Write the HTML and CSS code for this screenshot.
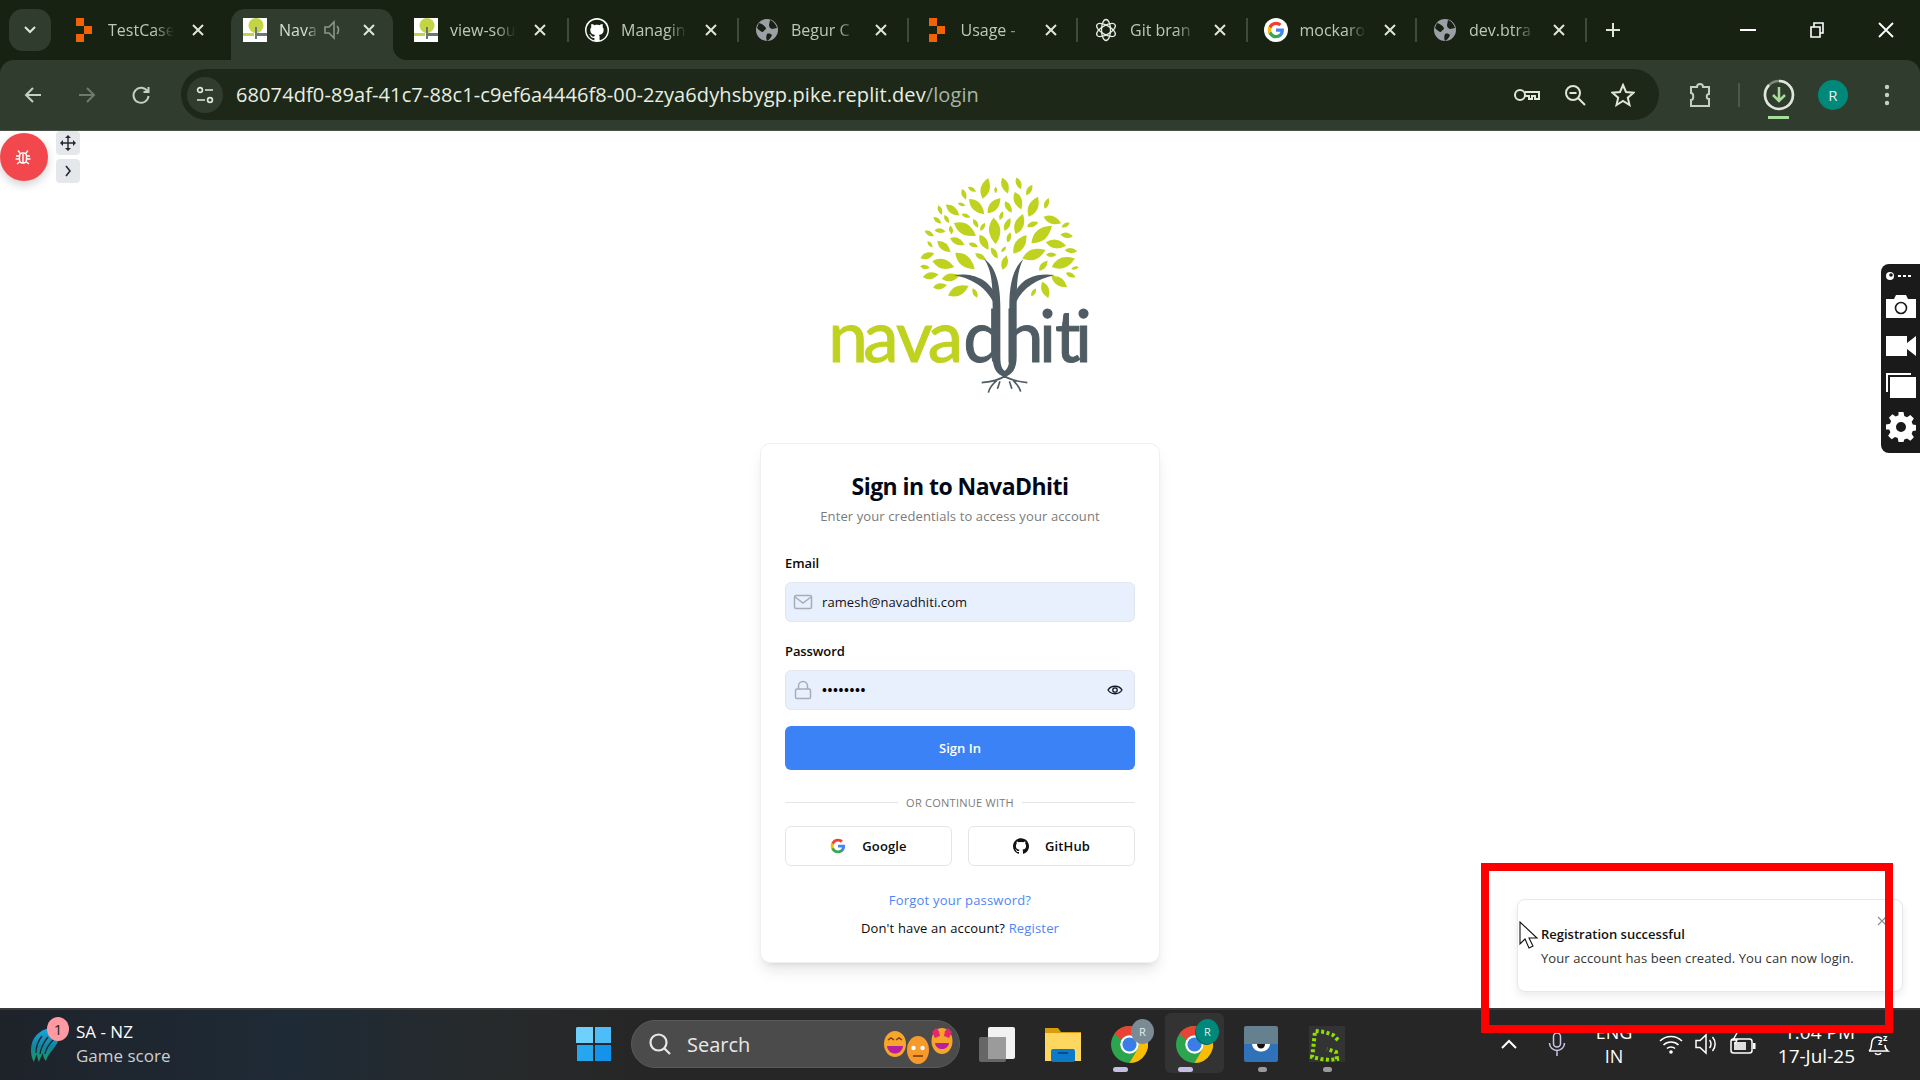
FILE: index.html
```html
<!DOCTYPE html>
<html>
 <head>
  <meta charset="UTF-8">
  <title>NavaDhiti</title>
  <link rel="stylesheet" href="styles.css">
 </head>
 <body>
  <svg class="sprite" width="0" height="0">
   <defs>
    <path id="leaf" d="M-1 0Q-.1-.85 1 0Q-.1.85-1 0Z"/>
    <linearGradient id="newsfill" x1="0" y1="0" x2="0" y2="1"><stop offset="0" stop-color="#1fa6e0"/><stop offset=".55" stop-color="#0f86a0"/><stop offset="1" stop-color="#1c9a62"/></linearGradient>
    <g id="xmark"><path d="M2 2L12 12M12 2L2 12" fill="none" stroke="currentColor" stroke-width="2"/></g>
    <g id="orange"><path d="M0 0h8v8H0zM8 8h8v8H8zM0 16h8v8H0z" fill="#f26207"/></g>
    <g id="minilogo">
     <rect width="24" height="24" fill="#fff"/>
     <ellipse cx="13" cy="7.500" rx="7.500" ry="7.500" fill="#c3d445"/>
     <path d="M12 9h2v12h-2z" fill="#6a767b"/>
     <path d="M0 15h11v3H0z" fill="#c3d445"/>
     <path d="M14 15h10v3H14z" fill="#6a767b"/>
    </g>
    <g id="globe">
     <circle cx="12" cy="12" r="11" fill="#9aa0a6"/>
     <path d="M4 5c3 1 5 2 7 5 0 2-2 2-3 4-2 0-4-2-6-4zM15 2c3 1 6 4 7 8l-5 1c-2-1-3-2-3-4zM12 16c2-1 4 0 5 1-1 3-3 5-5 6-1-2-1-5 0-7z" fill="#172213"/>
    </g>
    <g id="chrome">
     <circle cx="12" cy="12" r="12" fill="#2da44e"/>
     <path d="M12 0A12 12 0 0 1 22.4 6H12A6 6 0 0 0 6.8 9L2.2 5A12 12 0 0 1 12 0Z" fill="#ea4335"/>
     <path d="M22.4 6A12 12 0 0 1 12 24L17.2 15A6 6 0 0 0 17.2 9Z" fill="#fbbc05"/>
     <circle cx="12" cy="12" r="6" fill="#fff"/>
     <circle cx="12" cy="12" r="4.6" fill="#3b7de8"/>
    </g>
    <g id="gh"><path d="M12 .297c-6.63 0-12 5.373-12 12 0 5.303 3.438 9.8 8.205 11.385.6.113.82-.258.82-.63 0-.285-.01-1.04-.015-2.04-3.338.724-4.042-1.61-4.042-1.61C4.422 18.07 3.633 17.7 3.633 17.7c-1.087-.744.084-.729.084-.729 1.205.084 1.838 1.236 1.838 1.236 1.07 1.835 2.809 1.305 3.495.998.108-.776.417-1.305.76-1.605-2.665-.3-5.466-1.332-5.466-5.93 0-1.31.465-2.38 1.235-3.22-.135-.303-.54-1.523.105-3.176 0 0 1.005-.322 3.3 1.23.96-.267 1.98-.399 3-.405 1.02.006 2.04.138 3 .405 2.28-1.552 3.285-1.23 3.285-1.23.645 1.653.24 2.873.12 3.176.765.84 1.23 1.91 1.23 3.22 0 4.61-2.805 5.625-5.475 5.92.42.36.81 1.096.81 2.22 0 1.606-.015 2.896-.015 3.286 0 .315.21.69.825.57C20.565 22.092 24 17.592 24 12.297c0-6.627-5.373-12-12-12"/></g>
    <g id="gletter">
     <path d="M22.56 12.25c0-.78-.07-1.53-.2-2.25H12v4.26h5.92c-.26 1.37-1.04 2.53-2.21 3.31v2.77h3.57c2.08-1.92 3.28-4.74 3.28-8.09z" fill="#4285f4"/>
     <path d="M12 23c2.97 0 5.46-.98 7.28-2.66l-3.57-2.77c-.98.66-2.23 1.06-3.71 1.06-2.86 0-5.29-1.93-6.16-4.53H2.18v2.84C3.99 20.53 7.7 23 12 23z" fill="#34a853"/>
     <path d="M5.84 14.09c-.22-.66-.35-1.36-.35-2.09s.13-1.43.35-2.09V7.07H2.18C1.43 8.55 1 10.22 1 12s.43 3.45 1.18 4.93l2.85-2.22.81-.62z" fill="#fbbc05"/>
     <path d="M12 5.38c1.62 0 3.06.56 4.21 1.64l3.15-3.15C17.45 2.09 14.97 1 12 1 7.7 1 3.99 3.47 2.18 7.07l3.66 2.84c.87-2.6 3.3-4.53 6.16-4.53z" fill="#ea4335"/>
    </g>
   </defs>
  </svg>

  <header class="browser">
   <div class="tabstrip">
    <div class="tabmenu"><svg width="14" height="10" viewBox="0 0 14 10"><path d="M2 2l5 5 5-5" fill="none" stroke="#dfe6da" stroke-width="2"/></svg></div>
    <div class="tabs">
     <div class="tab no-sep"><svg class="fav" viewBox="0 0 24 24"><use href="#orange" transform="translate(4 0)"/></svg><span class="tab-title">TestCase</span><svg class="tab-x" viewBox="0 0 14 14"><use href="#xmark"/></svg></div>
     <div class="tab on"><svg class="fav" viewBox="0 0 24 24"><use href="#minilogo"/></svg><span class="tab-title short">Nava</span><svg class="tab-snd" viewBox="0 0 20 20"><path d="M2 7h4l5-5v16l-5-5H2zM14 6c2 2 2 6 0 8" fill="none" stroke="#8b9787" stroke-width="1.6"/></svg><svg class="tab-x" viewBox="0 0 14 14"><use href="#xmark"/></svg></div>
     <div class="tab"><svg class="fav" viewBox="0 0 24 24"><use href="#minilogo"/></svg><span class="tab-title">view-sou</span><svg class="tab-x" viewBox="0 0 14 14"><use href="#xmark"/></svg></div>
     <div class="tab"><svg class="fav" viewBox="0 0 24 24"><circle cx="12" cy="12" r="12" fill="#fff"/><use href="#gh" transform="translate(1.5 1.5) scale(.875)" fill="#172213"/></svg><span class="tab-title">Managin</span><svg class="tab-x" viewBox="0 0 14 14"><use href="#xmark"/></svg></div>
     <div class="tab"><svg class="fav" viewBox="0 0 24 24"><use href="#globe"/></svg><span class="tab-title">Begur C</span><svg class="tab-x" viewBox="0 0 14 14"><use href="#xmark"/></svg></div>
     <div class="tab"><svg class="fav" viewBox="0 0 24 24"><use href="#orange" transform="translate(4 0)"/></svg><span class="tab-title">Usage -</span><svg class="tab-x" viewBox="0 0 14 14"><use href="#xmark"/></svg></div>
     <div class="tab"><svg class="fav" viewBox="0 0 24 24"><g fill="none" stroke="#e6ebe3" stroke-width="1.3"><ellipse cx="12" cy="12" rx="4.5" ry="10.500"/><ellipse cx="12" cy="12" rx="4.5" ry="10.500" transform="rotate(60 12 12)"/><ellipse cx="12" cy="12" rx="4.5" ry="10.500" transform="rotate(120 12 12)"/></g></svg><span class="tab-title">Git bran</span><svg class="tab-x" viewBox="0 0 14 14"><use href="#xmark"/></svg></div>
     <div class="tab"><svg class="fav" viewBox="0 0 24 24"><circle cx="12" cy="12" r="12" fill="#fff"/><use href="#gletter" transform="translate(3 3) scale(.75)"/></svg><span class="tab-title">mockaro</span><svg class="tab-x" viewBox="0 0 14 14"><use href="#xmark"/></svg></div>
     <div class="tab"><svg class="fav" viewBox="0 0 24 24"><use href="#globe"/></svg><span class="tab-title">dev.btra</span><svg class="tab-x" viewBox="0 0 14 14"><use href="#xmark"/></svg></div>
    </div>
    <svg class="newtab" width="18" height="18" viewBox="0 0 18 18"><path d="M9 2v14M2 9h14" stroke="#dfe6da" stroke-width="2"/></svg>
    <div class="winctl">
     <svg width="16" height="16" viewBox="0 0 16 16"><path d="M0 8h16" stroke="#fff" stroke-width="2"/></svg>
     <svg width="16" height="18" viewBox="0 0 16 18"><path d="M2 6h9v10H2zM5 6V2h9v10h-3" fill="none" stroke="#fff" stroke-width="1.6"/></svg>
     <svg width="16" height="16" viewBox="0 0 16 16"><path d="M1 1l14 14M15 1L1 15" stroke="#fff" stroke-width="1.8"/></svg>
    </div>
   </div>
   <div class="toolbar">
    <div class="navbtn"><svg width="20" height="20" viewBox="0 0 20 20"><path d="M18 10H3M10 3l-7 7 7 7" fill="none" stroke="#c5d0c0" stroke-width="2"/></svg></div>
    <div class="navbtn"><svg width="20" height="20" viewBox="0 0 20 20"><path d="M2 10h15M10 3l7 7-7 7" fill="none" stroke="#6f7b6b" stroke-width="2"/></svg></div>
    <div class="navbtn"><svg width="20" height="20" viewBox="0 0 20 20"><path d="M16.5 6.5A7.5 7.5 0 1 0 17.5 11M17.5 2v5h-5" fill="none" stroke="#c5d0c0" stroke-width="2"/></svg></div>
    <div class="omnibox">
     <div class="site-btn"><svg width="20" height="20" viewBox="0 0 20 20"><g fill="none" stroke="#dfe6da" stroke-width="1.7"><circle cx="5" cy="5" r="2.4"/><path d="M10 5h8M2 15h8"/><circle cx="15" cy="15" r="2.4"/></g></svg></div>
     <span class="url">68074df0-89af-41c7-88c1-c9ef6a4446f8-00-2zya6dyhsbygp.pike.replit.dev<em>/login</em></span>
     <div class="omni-icons">
      <svg class="key-ic" width="28" height="20" viewBox="0 0 28 20"><g fill="none" stroke="#dfe6da" stroke-width="2"><circle cx="7" cy="10" r="5"/><path d="M12 7h14v7h-4v-3h-3v3h-3v-3h-4"/></g></svg>
      <svg width="24" height="24" viewBox="0 0 24 24"><g fill="none" stroke="#dfe6da" stroke-width="2"><circle cx="10" cy="10" r="7"/><path d="M15 15l7 7M6.5 10h7"/></g></svg>
      <svg width="24" height="24" viewBox="0 0 24 24"><path d="M12 2l3 7 7.5.7-5.700 5 1.700 7.300L12 18l-6.500 4 1.700-7.300-5.700-5L9 9z" fill="none" stroke="#dfe6da" stroke-width="2"/></svg>
     </div>
    </div>
    <div class="tool-right">
     <svg class="ext" width="24" height="26" viewBox="0 0 24 26"><path d="M3 5h6c0-4 6-4 6 0h6v7c-3 0-3 5 0 5v7H3v-6c3 0 3-7 0-7z" fill="none" stroke="#c5d0c0" stroke-width="2"/></svg>
     <span class="tool-sep"></span>
     <div class="dl">
      <svg width="32" height="32" viewBox="0 0 32 32"><circle cx="16" cy="16" r="14" fill="none" stroke="#7c8878" stroke-width="2.500"/><path d="M16 2A14 14 0 0 1 30 16A14 14 0 0 1 9 28A14 14 0 0 1 6 6" fill="none" stroke="#dfe6da" stroke-width="2.500"/><path d="M16 8v14M10 16l6 6 6-6" fill="none" stroke="#a8dc9a" stroke-width="2.500"/></svg>
      <i class="dl-bar"></i>
     </div>
     <span class="avatar">R</span>
     <svg width="6" height="24" viewBox="0 0 6 24"><g fill="#c5d0c0"><circle cx="3" cy="4" r="2.200"/><circle cx="3" cy="12" r="2.200"/><circle cx="3" cy="20" r="2.200"/></g></svg>
    </div>
   </div>
  </header>

  <main class="page">
   <svg class="logo" width="320" height="240" viewBox="0 0 960 720">
    <g fill="#bfd220">
     <use href="#leaf" transform="translate(556 85) rotate(-75) scale(32)"/>
     <use href="#leaf" transform="translate(615 77) rotate(70) scale(25)"/>
     <use href="#leaf" transform="translate(656 70) rotate(70) scale(19)"/>
     <use href="#leaf" transform="translate(492 103) rotate(70) scale(17)"/>
     <use href="#leaf" transform="translate(516 88) rotate(30) scale(14)"/>
     <use href="#leaf" transform="translate(587 90) rotate(90) scale(10)"/>
     <use href="#leaf" transform="translate(688 90) rotate(-60) scale(18)"/>
     <use href="#leaf" transform="translate(530 140) rotate(45) scale(32)"/>
     <use href="#leaf" transform="translate(582 137) rotate(-50) scale(30)"/>
     <use href="#leaf" transform="translate(654 122) rotate(70) scale(28)"/>
     <use href="#leaf" transform="translate(625 141) rotate(60) scale(20)"/>
     <use href="#leaf" transform="translate(700 140) rotate(-65) scale(33)"/>
     <use href="#leaf" transform="translate(740 130) rotate(-70) scale(17)"/>
     <use href="#leaf" transform="translate(485 133) rotate(20) scale(12)"/>
     <use href="#leaf" transform="translate(458 150) rotate(40) scale(26)"/>
     <use href="#leaf" transform="translate(498 167) rotate(20) scale(14)"/>
     <use href="#leaf" transform="translate(420 150) rotate(70) scale(15)"/>
     <use href="#leaf" transform="translate(440 177) rotate(60) scale(14)"/>
     <use href="#leaf" transform="translate(412 181) rotate(40) scale(15)"/>
     <use href="#leaf" transform="translate(604 167) rotate(-70) scale(14)"/>
     <use href="#leaf" transform="translate(527 190) rotate(60) scale(15)"/>
     <use href="#leaf" transform="translate(495 208) rotate(30) scale(38)"/>
     <use href="#leaf" transform="translate(548 200) rotate(-60) scale(14)"/>
     <use href="#leaf" transform="translate(584 213) rotate(85) scale(40)"/>
     <use href="#leaf" transform="translate(622 193) rotate(-65) scale(21)"/>
     <use href="#leaf" transform="translate(658 192) rotate(-70) scale(32)"/>
     <use href="#leaf" transform="translate(698 193) rotate(-20) scale(18)"/>
     <use href="#leaf" transform="translate(757 180) rotate(20) scale(28)"/>
     <use href="#leaf" transform="translate(797 195) rotate(-30) scale(14)"/>
     <use href="#leaf" transform="translate(725 223) rotate(-40) scale(40)"/>
     <use href="#leaf" transform="translate(800 226) rotate(10) scale(19)"/>
     <use href="#leaf" transform="translate(420 212) rotate(5) scale(17)"/>
     <use href="#leaf" transform="translate(453 210) rotate(80) scale(14)"/>
     <use href="#leaf" transform="translate(388 220) rotate(30) scale(16)"/>
     <use href="#leaf" transform="translate(472 244) rotate(25) scale(24)"/>
     <use href="#leaf" transform="translate(432 260) rotate(40) scale(26)"/>
     <use href="#leaf" transform="translate(552 247) rotate(60) scale(26)"/>
     <use href="#leaf" transform="translate(627 232) rotate(-75) scale(16)"/>
     <use href="#leaf" transform="translate(660 253) rotate(-55) scale(34)"/>
     <use href="#leaf" transform="translate(768 252) rotate(10) scale(31)"/>
     <use href="#leaf" transform="translate(390 253) rotate(50) scale(12)"/>
     <use href="#leaf" transform="translate(520 255) rotate(20) scale(15)"/>
     <use href="#leaf" transform="translate(583 279) rotate(60) scale(19)"/>
     <use href="#leaf" transform="translate(611 268) rotate(-50) scale(11)"/>
     <use href="#leaf" transform="translate(702 283) rotate(-20) scale(37)"/>
     <use href="#leaf" transform="translate(754 284) rotate(0) scale(16)"/>
     <use href="#leaf" transform="translate(813 272) rotate(5) scale(19)"/>
     <use href="#leaf" transform="translate(382 287) rotate(-20) scale(22)"/>
     <use href="#leaf" transform="translate(495 303) rotate(40) scale(38)"/>
     <use href="#leaf" transform="translate(542 290) rotate(30) scale(19)"/>
     <use href="#leaf" transform="translate(614 308) rotate(-75) scale(23)"/>
     <use href="#leaf" transform="translate(430 312) rotate(15) scale(34)"/>
     <use href="#leaf" transform="translate(375 321) rotate(10) scale(15)"/>
     <use href="#leaf" transform="translate(790 308) rotate(-20) scale(37)"/>
     <use href="#leaf" transform="translate(730 317) rotate(-50) scale(20)"/>
     <use href="#leaf" transform="translate(825 324) rotate(-15) scale(12)"/>
     <use href="#leaf" transform="translate(392 347) rotate(-10) scale(24)"/>
     <use href="#leaf" transform="translate(812 345) rotate(25) scale(16)"/>
     <use href="#leaf" transform="translate(452 352) rotate(-10) scale(27)"/>
     <use href="#leaf" transform="translate(778 365) rotate(35) scale(29)"/>
     <use href="#leaf" transform="translate(420 379) rotate(-10) scale(21)"/>
     <use href="#leaf" transform="translate(475 392) rotate(-25) scale(34)"/>
     <use href="#leaf" transform="translate(525 399) rotate(65) scale(16)"/>
     <use href="#leaf" transform="translate(736 390) rotate(70) scale(26)"/>
     <use href="#leaf" transform="translate(701 397) rotate(-60) scale(14)"/>
    </g>
    <g fill="#4f5c63">
     <path d="M552 296C585 318 601 365 601 440L601 590C601 618 607 628 614 632C621 628 628 618 628 590L628 440C628 370 640 325 670 297C650 335 650 380 650 440L650 590C650 628 635 645 614 650C593 645 578 628 578 590L578 440C578 370 575 330 552 296Z"/>
     <path d="M462 345C510 338 565 350 590 410L590 450C570 390 525 358 462 345Z"/>
     <path d="M765 345C710 338 660 352 640 410L640 450C655 390 705 358 765 345Z"/>
     <path d="M614 648C600 660 575 665 545 668M590 662C578 672 568 685 565 698M614 648C630 660 655 665 682 668M640 662C650 672 660 685 662 695M600 664C596 672 596 680 592 686M628 664C632 672 632 680 636 686" fill="none" stroke="#4f5c63" stroke-width="5"/>
    </g>
    <text class="logo-text" y="605"><tspan fill="#bfd220" stroke="#bfd220" x="85 190 288 383">nava</tspan><tspan fill="#4f5c63" stroke="#4f5c63" x="490 612 717 765 825">dhiti</tspan></text>
   </svg>

   <section class="card">
    <h1>Sign in to NavaDhiti</h1>
    <p class="sub">Enter your credentials to access your account</p>
    <label class="lbl">Email</label>
    <div class="field">
     <svg class="field-ic" width="20" height="20" viewBox="0 0 20 20"><g fill="none" stroke="#a6acb8" stroke-width="1.500"><rect x="1.500" y="3.500" width="17" height="13" rx="1.500"/><path d="M2 5l8 6 8-6"/></g></svg>
     <span class="val">ramesh@navadhiti.com</span>
    </div>
    <label class="lbl lbl-pass">Password</label>
    <div class="field">
     <svg class="field-ic" width="20" height="20" viewBox="0 0 20 20"><g fill="none" stroke="#a6acb8" stroke-width="1.500"><rect x="2.500" y="9" width="15" height="9.500" rx="1.500"/><path d="M5.500 9V6a4.500 4.500 0 0 1 9 0v3"/></g></svg>
     <span class="val dots">••••••••</span>
     <svg class="eye" width="16" height="16" viewBox="0 0 16 16"><g fill="none" stroke="#111827" stroke-width="1.300"><path d="M1 8c3-5 11-5 14 0-3 5-11 5-14 0z"/><circle cx="8" cy="8" r="2.200"/></g></svg>
    </div>
    <button class="primary">Sign In</button>
    <div class="divider"><span>OR CONTINUE WITH</span></div>
    <div class="socials">
     <button class="social"><svg width="16" height="16" viewBox="0 0 24 24"><use href="#gletter"/></svg>Google</button>
     <button class="social"><svg width="16" height="16" viewBox="0 0 24 24"><use href="#gh" fill="#111"/></svg>GitHub</button>
    </div>
    <a class="forgot">Forgot your password?</a>
    <p class="reg">Don't have an account? <a>Register</a></p>
   </section>

   <!-- dev bubble, floats over the page -->
   <div class="bug">
    <svg width="18" height="18" viewBox="0 0 18 18"><g fill="none" stroke="#fff" stroke-width="1.400"><rect x="5.500" y="5" width="7" height="10" rx="3"/><path d="M9 6v9M5.500 8H2M12.500 8H16M5.500 11H1.500M12.500 11H16.500M5.500 14L3 16M12.500 14L15 16M6 5L4 2.500M12 5L14 2.500"/></g></svg>
   </div>
   <div class="bug-handle h1"><svg width="16" height="16" viewBox="0 0 16 16"><path d="M8 0l3 3H5zM8 16l-3-3h6zM0 8l3-3v6zM16 8l-3 3V5zM7.300 3h1.400v10H7.300zM3 7.300h10v1.400H3z" fill="#1f2937"/></svg></div>
   <div class="bug-handle h2"><svg width="8" height="12" viewBox="0 0 8 12"><path d="M2 1l4 5-4 5" fill="none" stroke="#1f2937" stroke-width="1.600"/></svg></div>

   <div class="recorder">
    <svg width="32" height="10" viewBox="0 0 32 10"><circle cx="5" cy="5" r="4" fill="#fff"/><circle cx="6" cy="4" r="1.800" fill="#1a1a1a"/><path d="M13 4h3v2h-3zM18 4h3v2h-3zM23 4h3v2h-3z" fill="#fff"/></svg>
    <svg class="rec-cam" width="30" height="23" viewBox="0 0 30 23"><path d="M0 4h8l2-4h10l2 4h8v19H0z" fill="#fff"/><circle cx="15" cy="13" r="5.500" fill="none" stroke="#1a1a1a" stroke-width="1.600"/></svg>
    <svg class="rec-vid" width="30" height="20" viewBox="0 0 30 20"><path d="M0 0h21v7l9-7v20l-9-7v7H0z" fill="#fff"/></svg>
    <svg width="30" height="25" viewBox="0 0 30 25"><path d="M0 0h25v2H2v17H0z" fill="#fff"/><path d="M4 4h26v21H4z" fill="#fff"/></svg>
    <svg class="rec-gear" width="30" height="30" viewBox="0 0 24 24"><path fill="#fff" fill-rule="evenodd" d="M10 0h4l.6 3.200 2.200.9 2.700-1.800 2.800 2.800-1.800 2.700.9 2.200 3.200.6v4l-3.200.6-.9 2.200 1.800 2.700-2.800 2.800-2.700-1.800-2.200.9L14 24h-4l-.6-3.200-2.200-.9-2.700 1.800-2.800-2.800 1.800-2.700-.9-2.200L0 14v-4l3.200-.6.900-2.200-1.800-2.700 2.800-2.800 2.700 1.800 2.200-.9zM12 8a4 4 0 1 0 0 8 4 4 0 0 0 0-8z"/></svg>
   </div>

   <div class="toast">
    <div class="toast-title">Registration successful</div>
    <div class="toast-body">Your account has been created. You can now login.</div>
    <svg class="toast-x" width="10" height="10" viewBox="0 0 10 10"><path d="M1 1l8 8M9 1L1 9" stroke="#8b8b8b" stroke-width="1.100"/></svg>
   </div>
   <svg class="cursor" width="20" height="30" viewBox="0 0 20 30"><path d="M1 1v22l5-5 4 9 4-2-4-8h8z" fill="#fff" stroke="#111" stroke-width="1.100"/></svg>
  </main>

  <footer class="taskbar">
   <div class="news">
    <svg class="news-ic" width="32" height="36" viewBox="0 0 32 36"><path d="M20 1C9 3 1 11 1 23c0 5 1 9 3 12 1-4 2-6 3-8 0 3 1 6 2 8 1-4 3-7 4-9 0 3 1 6 3 8 1-5 5-9 8-13 3-4 6-9 5-14C28 3 24 1 20 1z" fill="url(#newsfill)"/><path d="M12 9C8 14 6 20 6 26M18 10C14 15 11 20 10 27M24 12C20 16 16 21 15 27" fill="none" stroke="#1a2531" stroke-width="1.300"/></svg>
    <span class="news-badge">1</span>
    <div class="news-txt"><b>SA - NZ</b><span>Game score</span></div>
   </div>
   <div class="task-center">
    <svg class="start" width="36" height="36" viewBox="0 0 36 36"><path d="M1 1h16v16H0V2z" fill="#6fd0fb"/><path d="M19 1h16v16H19z" fill="#4ebcf7"/><path d="M1 19h16v16H1z" fill="#27a6f0"/><path d="M19 19h16v16H19z" fill="#1493ea"/></svg>
    <div class="search">
     <svg width="24" height="24" viewBox="0 0 24 24"><g fill="none" stroke="#e8e8e8" stroke-width="2.200"><circle cx="10.500" cy="10.500" r="8"/><path d="M16.500 16.500L22 22"/></g></svg>
     <span>Search</span>
     <div class="emoji">
      <svg width="24" height="26" viewBox="0 0 24 26"><ellipse cx="12" cy="13" rx="11" ry="13" fill="#f7a62b"/><path d="M4 15h16c-1 10-15 10-16 0z" fill="#b81fa0"/><path d="M5 9l3-2 3 2M13 9l3-2 3 2" fill="none" stroke="#7a3b10" stroke-width="1.500"/></svg>
      <svg class="em-low" width="22" height="28" viewBox="0 0 22 28"><ellipse cx="11" cy="14" rx="11" ry="14" fill="#f59a2b"/><circle cx="6.500" cy="12" r="2.200" fill="#fff"/><circle cx="15.500" cy="12" r="2.200" fill="#fff"/><path d="M6 20h10" stroke="#7a3b10" stroke-width="1.600"/></svg>
      <svg class="em-high" width="22" height="28" viewBox="0 0 22 28"><ellipse cx="11" cy="15" rx="10.500" ry="13" fill="#f5a52c"/><path d="M1 6l4-4 3 3 1 5-5 2zM21 6l-4-4-3 3-1 5 5 2z" fill="#e8266b"/><path d="M4 17h14c-1 8-13 8-14 0z" fill="#b81fa0"/></svg>
     </div>
    </div>
    <div class="apps">
     <div class="app app-view"><svg width="36" height="36" viewBox="0 0 36 36"><rect x="0" y="11" width="27" height="25" rx="2" fill="#666"/><rect x="9" y="1" width="27" height="32" rx="2" fill="#f2f2f2"/><rect x="9" y="11" width="18" height="22" fill="#9b9b9b"/></svg></div>
     <div class="app app-files"><svg width="36" height="36" viewBox="0 0 36 36"><path d="M0 2h13l3 4h20v29H0z" fill="#d99c0a"/><path d="M0 7h36v28H0z" fill="#fdd75f"/><rect x="6" y="23" width="24" height="13" rx="2" fill="#0c79c9"/><path d="M13 27h10" stroke="#063f73" stroke-width="1.500"/></svg></div>
     <div class="app app-c1"><svg width="37" height="37" viewBox="0 0 24 24"><use href="#chrome"/></svg><span class="ch-badge grey">R</span><i class="pip wide"></i></div>
     <div class="app app-c2"><svg width="37" height="37" viewBox="0 0 24 24"><use href="#chrome"/></svg><span class="ch-badge teal">R</span><i class="pip wide"></i></div>
     <div class="app app-eye"><svg width="34" height="36" viewBox="0 0 34 36"><path d="M2 0h30a2 2 0 0 1 2 2v16H0V2a2 2 0 0 1 2-2z" fill="#65808f"/><path d="M0 18h34v16a2 2 0 0 1-2 2H2a2 2 0 0 1-2-2z" fill="#2f72b9"/><path d="M8 18h18c-1 10-17 10-18 0z" fill="#fff"/><path d="M13 18h8c0 6-8 6-8 0z" fill="#111"/></svg><i class="pip"></i></div>
     <div class="app app-g"><svg width="36" height="36" viewBox="0 0 36 36"><rect width="36" height="36" fill="#333"/><path d="M29 14L24 9 16 6 6 5 5 15 4 24 3 31 12 33 21 34 28 33 27 26 18 23" fill="none" stroke="#8ee000" stroke-width="4" stroke-dasharray="3 2.500"/></svg><i class="pip"></i></div>
    </div>
   </div>
   <div class="tray">
    <svg class="tr-chev" width="18" height="10" viewBox="0 0 18 10"><path d="M2 9l7-7 7 7" fill="none" stroke="#fff" stroke-width="2"/></svg>
    <svg class="tr-mic" width="18" height="24" viewBox="0 0 18 24"><g fill="none" stroke="#c9c6e8" stroke-width="1.500"><rect x="5.500" y="1" width="7" height="14" rx="3.500"/><path d="M1.500 11a7.500 7.500 0 0 0 15 0M9 18.500V24"/></g></svg>
    <div class="tr-lang"><span>ENG</span><span>IN</span></div>
    <svg class="tr-wifi" width="24" height="20" viewBox="0 0 24 20"><g fill="none" stroke="#fff" stroke-width="1.600"><path d="M1 7c6-6 16-6 22 0M4.500 11c4-4 11-4 15 0M8 14.500c2-2 6-2 8 0"/></g><circle cx="12" cy="18" r="1.800" fill="#fff"/></svg>
    <svg class="tr-vol" width="24" height="22" viewBox="0 0 24 22"><g fill="none" stroke="#fff" stroke-width="1.500"><path d="M1 7.500h4L11 2v18l-6-5.500H1zM14.500 7c2 2 2 6 0 8M17.500 4c3.500 4 3.500 10 0 14"/></g></svg>
    <svg class="tr-bat" width="26" height="22" viewBox="0 0 26 22"><rect x="1" y="6" width="21" height="14" rx="2.500" fill="none" stroke="#fff" stroke-width="1.500"/><rect x="4" y="9" width="12" height="8" fill="#fff" opacity=".85"/><rect x="23" y="10" width="2.500" height="6" fill="#fff"/><path d="M7 0L3 7h4L5 11" fill="none" stroke="#fff" stroke-width="1.400"/></svg>
    <div class="tr-clock"><span>1:04 PM</span><span>17-Jul-25</span></div>
    <svg class="tr-bell" width="24" height="24" viewBox="0 0 24 24"><path d="M1 19c3-2 2-6 3-10 1-3 4-4 6-4M10 5c2 0 3 .5 4 2M17 13c0 3 1 4.500 3 6H1M7 21c1 2 5 2 6 0" fill="none" stroke="#fff" stroke-width="1.500"/><text x="10" y="13" class="zz">z</text><text x="15" y="9" class="zz">z</text></svg>
   </div>
  </footer>

  <div class="redbox"></div>
 </body>
</html>
```

FILE: styles.css
```css
*{ margin:0; padding:0; box-sizing:border-box;}

html,body{ height:100%;}

body{
 width:1920px;
 height:1080px;
 overflow:hidden;
 position:relative;
 display:flex;
 flex-direction:column;
 background:#fff;
 font-family:"Open Sans","Noto Sans",sans-serif;
}

.sprite{ position:absolute;}

/* browser top */
.browser{ background:#172213; height:131px;}

.tabstrip{
 height:60px;
 padding-top:9px;
 display:flex;
}

.tabmenu{
 width:42px;
 height:42px;
 margin-left:9px;
 margin-right:9px;
 border-radius:14px;
 background:#303c2d;
 display:flex;
 align-items:center;
 justify-content:center;
}

.tabs{ display:flex;}

.tab{
 width:171px;
 height:51px;
 padding:0 4px 9px 12px;
 display:flex;
 align-items:center;
 color:#bdc8b8;
}
.tab:nth-child(4){ width:170px;}
.tab:nth-child(n+5){ width:169.5px;}
.tab::after{
 content:"";
 width:2px;
 height:24px;
 margin-left:auto;
 background:#3f4a3c;
}
.tab.no-sep::after{ background:none;}

.tab.on{
 width:162px;
 margin-right:9px;
 padding-right:0;
 position:relative;
 border-radius:14px 14px 0 0;
 background:#303c2d;
 color:#d5dfd0;
}
.tab.on::after{ display:none;}
.tab.on::before{
 content:"";
 position:absolute;
 right:-14px;
 bottom:0;
 width:14px;
 height:14px;
 background:radial-gradient(circle at 100% 0,transparent 14px,#303c2d 14.5px);
}

.fav{ width:24px; height:24px; flex:none;}

.tab-title{
 width:66px;
 margin-left:12px;
 font-size:16px;
 white-space:nowrap;
 overflow:hidden;
 -webkit-mask-image:linear-gradient(90deg,#000 70%,transparent);
 mask-image:linear-gradient(90deg,#000 70%,transparent);
}
.tab-title.short{ width:40px;}

.tab-snd{ width:20px; height:20px; margin-left:4px; flex:none;}
.tab.on .tab-x{ margin-left:19px;}

.tab-x{
 width:14px;
 height:14px;
 margin-left:17px;
 flex:none;
 color:#dfe6da;
}

.newtab{ margin:12px 0 0 13px;}

.winctl{
 margin-left:auto;
 height:30px;
 margin-top:6px;
 padding-right:26px;
 display:flex;
 align-items:center;
 gap:53px;
}

.toolbar{
 height:71px;
 padding:9px 0 10px 6px;
 display:flex;
 align-items:stretch;
 background:#303c2d;
 border-radius:14px 14px 0 0;
 border-bottom:1px solid #4a5347;
}

.navbtn{
 width:54px;
 display:flex;
 align-items:center;
 justify-content:center;
}

.omnibox{
 width:1478px;
 margin-left:13px;
 display:flex;
 align-items:center;
 padding-left:6px;
 border-radius:26px;
 background:#1d2818;
}

.site-btn{
 width:36px;
 height:36px;
 border-radius:50%;
 background:#303c2d;
 display:flex;
 align-items:center;
 justify-content:center;
}

.url{
 margin-left:13px;
 font-size:20px;
 letter-spacing:.1px;
 color:#e8eee3;
 white-space:nowrap;
}
.url em{ font-style:normal; color:#aab5a5;}

.omni-icons{
 margin-left:auto;
 padding-right:24px;
 display:flex;
 align-items:center;
 gap:24px;
}
.key-ic{ margin-right:-2px;}

.tool-right{
 flex:1;
 display:flex;
 align-items:center;
 padding-left:29px;
}
.tool-sep{ width:2px; height:24px; margin:0 23px 0 26px; background:#4d584a;}
.dl{ position:relative; width:32px; height:32px; margin-right:23px;}
.dl-bar{
 position:absolute;
 left:5px;
 bottom:-8px;
 width:21px;
 height:3px;
 background:#a8dc9a;
}
.avatar{
 width:30px;
 height:30px;
 margin-right:36px;
 border-radius:50%;
 background:#00897b;
 color:#dff2ee;
 font-size:15px;
 line-height:30px;
 text-align:center;
}

/* page */
.page{
 flex:1;
 padding-top:29px;
 display:flex;
 flex-direction:column;
 align-items:center;
}

.logo{ flex:none;}
.logo-text{ font-family:Lato,sans-serif; font-size:213px; font-weight:400; stroke-width:3px;}

.card{
 width:400px;
 height:520px;
 margin-top:43px;
 padding:0 24px;
 background:#fff;
 border:1px solid #f0f0f0;
 border-radius:10px;
 box-shadow:0 10px 15px -3px rgba(0,0,0,.1),0 4px 6px -4px rgba(0,0,0,.1);
 color:#0a0a0a;
}

h1{
 margin-top:25px;
 height:34px;
 font-size:23px;
 font-weight:700;
 line-height:34px;
 text-align:center;
 letter-spacing:-.55px;
 color:#020817;
}

.sub{
 margin-top:3px;
 font-size:13px;
 line-height:20px;
 text-align:center;
 letter-spacing:.11px;
 color:#7b7b7b;
}

.lbl{
 display:block;
 margin-top:27px;
 font-size:13px;
 font-weight:600;
 line-height:20px;
 letter-spacing:-.1px;
}
.lbl-pass{ margin-top:19px;}

.field{
 height:40px;
 margin-top:9px;
 padding:0 11px 0 7px;
 display:flex;
 align-items:center;
 background:#e8f0fe;
 border:1px solid #e2e6ee;
 border-radius:6px;
}

.val{
 margin-left:9px;
 font-size:13px;
 letter-spacing:.1px;
 color:#111;
}
.val.dots{ font-size:13px; letter-spacing:.6px; color:#000; font-weight:700;}
.eye{ margin-left:auto;}

.primary{
 display:block;
 width:100%;
 height:44px;
 margin-top:16px;
 border:0;
 border-radius:6px;
 background:#3b82f6;
 color:#fff;
 font:600 13px "Open Sans","Noto Sans",sans-serif;
}

.divider{
 margin-top:22px;
 height:20px;
 display:flex;
 align-items:center;
 gap:8px;
 font-size:11px;
 letter-spacing:.25px;
 color:#7b7b7b;
}
.divider::before,.divider::after{
 content:"";
 flex:1;
 height:1px;
 background:#e5e5e5;
}

.socials{
 margin-top:14px;
 display:grid;
 grid-template-columns:1fr 1fr;
 gap:16px;
}

.social{
 height:40px;
 display:flex;
 align-items:center;
 justify-content:center;
 gap:16px;
 background:#fff;
 border:1px solid #e5e5e5;
 border-radius:6px;
 color:#0a0a0a;
 font:600 13px "Open Sans","Noto Sans",sans-serif;
 letter-spacing:.15px;
}

.forgot{
 display:block;
 margin-top:24px;
 font-size:13px;
 line-height:20px;
 text-align:center;
 letter-spacing:.2px;
 color:#4f86f7;
}

.reg{
 margin-top:8px;
 font-size:13px;
 line-height:20px;
 text-align:center;
 letter-spacing:.16px;
}
.reg a{ color:#4f86f7;}

/* things floating over the page */
.bug{
 position:absolute;
 left:0;
 top:133px;
 width:48px;
 height:48px;
 padding-right:2px;
 display:flex;
 align-items:center;
 justify-content:center;
 border-radius:50%;
 background:#f2474c;
 box-shadow:0 4px 10px rgba(0,0,0,.18);
}

.bug-handle{
 position:absolute;
 left:56px;
 width:24px;
 height:24px;
 display:flex;
 align-items:center;
 justify-content:center;
 border-radius:4px;
 background:#e5e7eb;
}
.bug-handle.h1{ top:131px;}
.bug-handle.h2{ top:159px;}

.recorder{
 position:absolute;
 left:1881px;
 top:264px;
 width:39px;
 height:189px;
 padding:7px 4px 0 5px;
 display:flex;
 flex-direction:column;
 align-items:center;
 gap:17px;
 background:#1a1a1a;
 border-radius:8px 0 0 8px;
}
.rec-cam{ margin-top:-3px;}
.rec-vid{ margin-top:1px;}
.rec-gear{ margin-top:-3px;}

.toast{
 position:absolute;
 left:1517px;
 top:899px;
 width:386px;
 height:93px;
 padding:24px 23px 0;
 background:#fff;
 border:1px solid #e8e8e8;
 border-radius:8px;
 box-shadow:0 4px 8px rgba(0,0,0,.08);
}
.toast-title{ font-size:13px; font-weight:600; line-height:20px; color:#111;}
.toast-body{ margin-top:4px; font-size:13px; line-height:20px; letter-spacing:.1px; color:#333;}
.toast-x{ position:absolute; right:15px; top:16px;}

.cursor{ position:absolute; left:1519px; top:921px;}

.redbox{
 position:absolute;
 left:1481px;
 top:863px;
 width:412px;
 height:170px;
 border:8px solid #f00;
}

/* windows taskbar */
.taskbar{
 height:72px;
 flex:none;
 display:flex;
 border-top:2px solid #3a3a3a;
 background:linear-gradient(90deg,#1e232a,#1e2a36 280px,#272a2c 480px,#262626 640px);
 color:#fff;
}

.news{
 position:relative;
 width:576px;
 display:flex;
 align-items:center;
 padding-left:30px;
}
.news-ic{ flex:none;}
.news-badge{
 position:absolute;
 left:47px;
 top:7px;
 width:22px;
 height:24px;
 border-radius:50%;
 background:#ff9aa2;
 color:#222;
 font-size:15px;
 line-height:24px;
 text-align:center;
}
.news-txt{
 margin-left:14px;
 margin-top:-2px;
 display:flex;
 flex-direction:column;
 gap:2px;
 font-size:17px;
 line-height:22px;
 white-space:nowrap;
}
.news-txt b{ font-weight:400;}
.news-txt span{ color:#cfcfcf;}

.task-center{ display:flex; align-items:center; margin-top:-2px;}
.start{ flex:none;}

.search{
 width:329px;
 height:48px;
 margin-left:19px;
 padding:0 6px 0 16px;
 display:flex;
 align-items:center;
 background:#4b4b4b;
 border:1px solid #5a5a5a;
 border-radius:24px;
 font-size:20px;
 color:#e8e8e8;
}
.search span{ margin-left:15px;}
.emoji{ margin-left:auto; display:flex; align-items:center; gap:0;}
.em-low{ margin:12px 2px 0 0;}
.em-high{ margin-top:-8px;}

.apps{
 margin-left:19px;
 display:flex;
 align-items:center;
}
.app{
 position:relative;
 width:36px;
 height:36px;
 flex:none;
}
.app-files{ margin-left:30px;}
.app-c1{ margin-left:30px;}
.app-c2{ margin-left:29px;}
.app-c2::before{
 content:"";
 position:absolute;
 left:-11px;
 top:-13px;
 width:59px;
 height:60px;
 border-radius:6px;
 background:#333;
 z-index:0;
}
.app-c2 > svg{ position:relative;}
.app-eye{ margin-left:32px;}
.app-g{ margin-left:29px;}

.ch-badge{
 position:absolute;
 left:20px;
 top:-7px;
 width:23px;
 height:25px;
 border-radius:50%;
 font-size:11px;
 line-height:25px;
 text-align:center;
 color:#dfeee9;
}
.ch-badge.grey{ background:#7b8b96;}
.ch-badge.teal{ background:#00897b; box-shadow:-1px 1px 0 #006a5f;}

.pip{
 position:absolute;
 left:50%;
 bottom:-10px;
 width:9px;
 height:5px;
 margin-left:-4.500px;
 border-radius:3px;
 background:#9a9a9a;
}
.pip.wide{ left:25%; width:15px; margin-left:-7.500px; background:#c4c0e4;}

.tray{
 flex:1;
 display:flex;
 align-items:center;
 margin-top:-2px;
}
.tr-chev{ margin-left:155px;}
.tr-mic{ margin-left:30px;}
.tr-lang{
 width:60px;
 margin-left:18px;
 display:flex;
 flex-direction:column;
 align-items:center;
 font-size:18px;
 line-height:24px;
}
.tr-wifi{ margin-left:15px;}
.tr-vol{ margin-left:12px;}
.tr-bat{ margin-left:11px;}
.tr-clock{
 width:96px;
 margin-left:3px;
 display:flex;
 flex-direction:column;
 align-items:flex-end;
 font-size:19px;
 line-height:24px;
 white-space:nowrap;
}
.tr-bell{ margin-left:13px;}
.zz{ font-size:9px; font-weight:700; fill:#fff;}
```
